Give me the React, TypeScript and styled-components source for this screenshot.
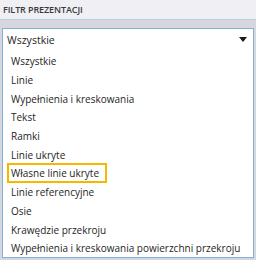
import { createGlobalStyle } from 'styled-components'
import styled from 'styled-components'

const GlobalStyle = createGlobalStyle`
  html, body {
    margin: 0;
    padding: 0;
    background: #d6d6de;
  }
  body {
    font-family: 'Open Sans', 'Liberation Sans', sans-serif;
    color: #1e1e1e;
  }
`

const Panel = styled.div`
  width: 256px;
  height: 260px;
  display: flex;
  flex-direction: column;
  background: #d6d6de;
  overflow: hidden;
`

const Header = styled.div`
  height: 19px;
  display: flex;
  align-items: center;
  padding-left: 3px;
  background: #f0eff4;
  border-bottom: 1px solid #b4cfe2;
  font-size: 9px;
  font-weight: 600;
  color: #3a3a3a;
  letter-spacing: -0.1px;
`

const Body = styled.div`
  display: flex;
  flex-direction: column;
  padding: 8px 2px 0 2px;
`

const SelectBox = styled.div`
  height: 21px;
  display: flex;
  align-items: center;
  justify-content: space-between;
  padding: 0 5px 0 4px;
  background: #ffffff;
  border: 1px solid #7fb2d6;
  border-bottom: none;
  font-size: 10.5px;
`

const Arrow = styled.span`
  width: 0;
  height: 0;
  border-left: 4px solid transparent;
  border-right: 4px solid transparent;
  border-top: 5px solid #1a1a1a;
  margin-right: 1px;
`

const List = styled.ul`
  list-style: none;
  margin: 0;
  padding: 2px 0 0 0;
  height: 205px;
  background: #ffffff;
  border: 1px solid #7fb2d6;
  border-top: none;
  display: flex;
  flex-direction: column;
`

const Item = styled.li<{ $focused?: boolean }>`
  height: 18.7px;
  flex-shrink: 0;
  display: flex;
  align-items: center;
  padding-left: 8px;
  font-size: 10px;
  white-space: nowrap;
  box-sizing: border-box;
  ${(p) =>
    p.$focused &&
    `
    align-self: flex-start;
    height: 20px;
    margin: -0.65px 0 -0.65px 4px;
    padding: 0 6px 0 2px;
    border: 2px solid #f5b800;
  `}
`

const items = [
  'Wszystkie',
  'Linie',
  'Wypełnienia i kreskowania',
  'Tekst',
  'Ramki',
  'Linie ukryte',
  'Własne linie ukryte',
  'Linie referencyjne',
  'Osie',
  'Krawędzie przekroju',
  'Wypełnienia i kreskowania powierzchni przekroju',
]

export default function App() {
  return (
    <>
      <GlobalStyle />
      <Panel>
        <Header>FILTR PREZENTACJI</Header>
        <Body>
          <SelectBox>
            <span>Wszystkie</span>
            <Arrow />
          </SelectBox>
          <List>
            {items.map((label, i) => (
              <Item key={label} $focused={i === 6}>
                {label}
              </Item>
            ))}
          </List>
        </Body>
      </Panel>
    </>
  )
}
